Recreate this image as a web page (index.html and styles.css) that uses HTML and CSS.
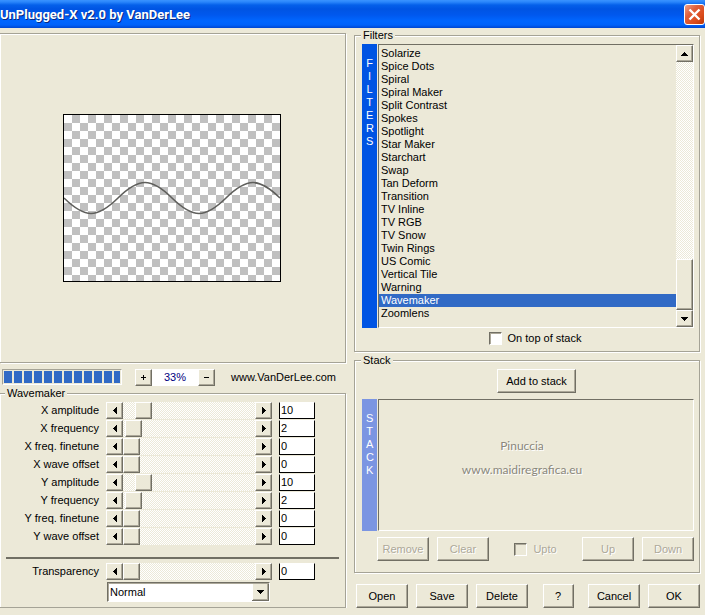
FILE: index.html
```html
<!DOCTYPE html>
<html lang="en">
<head>
    <meta charset="UTF-8">
    <meta name="viewport" content="width=device-width, initial-scale=1.0">
    <title>UnPlugged-X v2.0 by VanDerLee</title>
    <link rel="stylesheet" href="styles.css">
</head>

<body>
    <header class="titlebar">
        <h1>UnPlugged-X v2.0 by VanDerLee</h1>
        <button class="close" aria-label="Close">
            <svg viewBox="0 0 17 17" width="17" height="17"><path d="M3.500 3.500l10 10M13.500 3.500l-10 10" stroke="#fff" stroke-width="2.400" fill="none"/></svg>
        </button>
    </header>

    <main class="main">
        <section class="left">
            <div class="preview">
                <svg class="canvas" viewBox="0 0 216 166" width="216" height="166">
                    <path d="M0 83C21 103.600 33 103.600 54 83S87 62.400 108 83S141 103.600 162 83S195 62.400 216 83" fill="none" stroke="#5f5f5c" stroke-width="1.600"/>
                </svg>
            </div>

            <div class="zoombar">
                <div class="progress" role="progressbar" aria-label="Progress"></div>
                <div class="zoom">
                    <button class="mini" aria-label="Zoom in"><svg viewBox="0 0 7 7" width="7" height="7"><path d="M1 3h5v1H1zM3 1h1v5H3z"/></svg></button>
                    <output class="percent">33%</output>
                    <button class="mini" aria-label="Zoom out"><svg viewBox="0 0 7 7" width="7" height="7"><path d="M1 3h5v1H1z"/></svg></button>
                </div>
                <a class="site" href="#">www.VanDerLee.com</a>
            </div>

            <fieldset class="group params">
                <legend>Wavemaker</legend>
                <div class="rows" id="rows"></div>
                <hr class="rule">
                <div class="rows" id="transparency"></div>
                <div class="blend">
                    <select class="mode" aria-label="Blend mode">
                        <option>Normal</option>
                    </select>
                </div>
            </fieldset>
        </section>

        <section class="right">
            <fieldset class="group">
                <legend>Filters</legend>
                <div class="listrow">
                    <div class="side">FILTERS</div>
                    <div class="listbox">
                        <select class="filters" size="21" aria-label="Filters">
                            <option>Solarize</option>
                            <option>Spice Dots</option>
                            <option>Spiral</option>
                            <option>Spiral Maker</option>
                            <option>Split Contrast</option>
                            <option>Spokes</option>
                            <option>Spotlight</option>
                            <option>Star Maker</option>
                            <option>Starchart</option>
                            <option>Swap</option>
                            <option>Tan Deform</option>
                            <option>Transition</option>
                            <option>TV Inline</option>
                            <option>TV RGB</option>
                            <option>TV Snow</option>
                            <option>Twin Rings</option>
                            <option>US Comic</option>
                            <option>Vertical Tile</option>
                            <option>Warning</option>
                            <option selected>Wavemaker</option>
                            <option>Zoomlens</option>
                        </select>
                        <div class="scrollbar">
                            <button class="mini" aria-label="Scroll up"><svg viewBox="0 0 7 4" width="7" height="4"><path d="M3 0h1v1h1v1h1v1h1v1H0V3h1V2h1V1h1z"/></svg></button>
                            <div class="scrolltrack"><div class="scrollthumb"></div></div>
                            <button class="mini" aria-label="Scroll down"><svg viewBox="0 0 7 4" width="7" height="4"><path d="M0 0h7v1H6v1H5v1H4v1H3V3H2V2H1V1H0z"/></svg></button>
                        </div>
                    </div>
                </div>
                <label class="check center"><input type="checkbox"> On top of stack</label>
            </fieldset>

            <fieldset class="group stack">
                <legend>Stack</legend>
                <button class="btn wide">Add to stack</button>
                <div class="listrow">
                    <div class="side dim">STACK</div>
                    <div class="listbox empty">
                        <p class="mark">Pinuccia<br>www.maidiregrafica.eu</p>
                    </div>
                </div>
                <div class="actions">
                    <button class="btn" disabled>Remove</button>
                    <button class="btn" disabled>Clear</button>
                    <label class="check off"><input type="checkbox" disabled> Upto</label>
                    <button class="btn" disabled>Up</button>
                    <button class="btn" disabled>Down</button>
                </div>
            </fieldset>

            <footer class="footer">
                <button class="btn">Open</button>
                <button class="btn">Save</button>
                <button class="btn">Delete</button>
                <button class="btn help">?</button>
                <button class="btn">Cancel</button>
                <button class="btn">OK</button>
            </footer>
        </section>
    </main>

    <script>
        const params = [
            ["X amplitude", 10],
            ["X frequency", 2],
            ["X freq. finetune", 0],
            ["X wave offset", 0],
            ["Y amplitude", 10],
            ["Y frequency", 2],
            ["Y freq. finetune", 0],
            ["Y wave offset", 0]
        ];

        // Add one label + slider + number row
        function addRow(parent, name, value) {
            const id = name.toLowerCase().replace(/[^a-z]+/g, "-");
            const row = document.createElement("div");
            row.className = "row";
            row.innerHTML = `
                <label for="${id}">${name}</label>
                <div class="slider">
                    <button class="mini" aria-label="Decrease"><svg viewBox="0 0 4 7" width="4" height="7"><path d="M4 0v7H3V6H2V5H1V4H0V3h1V2h1V1h1V0z"/></svg></button>
                    <input type="range" id="${id}" min="0" max="100" value="${value}">
                    <button class="mini" aria-label="Increase"><svg viewBox="0 0 4 7" width="4" height="7"><path d="M0 0v7h1V6h1V5h1V4h1V3H3V2H2V1H1V0z"/></svg></button>
                </div>
                <input type="text" class="value" aria-label="${name} value" value="${value}">
            `;
            const range = row.querySelector("input[type=range]");
            const text = row.querySelector(".value");
            range.addEventListener("input", () => text.value = range.value);
            text.addEventListener("change", () => range.value = text.value);
            parent.appendChild(row);
        }

        params.forEach(p => addRow(document.getElementById("rows"), p[0], p[1]));
        addRow(document.getElementById("transparency"), "Transparency", 0);
    </script>
</body>
</html>
```
FILE: styles.css
```css
* {
    box-sizing: border-box;
}

body {
    margin: 0;
    background-color: #ece9d8;
    color: #000;
    font: 11px/13px "Liberation Sans", Arial, sans-serif;
}

button, input, select {
    margin: 0;
    font: inherit;
    color: inherit;
    border-radius: 0;
}

/* title bar */
.titlebar {
    display: flex;
    align-items: center;
    justify-content: space-between;
    height: 28px;
    background: linear-gradient(#3a93ff 0, #2a86fb 2px, #0560ea 5px, #0054e3 9px, #0058ee 15px, #0066ff 21px, #0062fa 25px, #0046d0 28px);
}

h1 {
    margin: 0;
    padding-top: 2px;
    font: bold 13px/16px Roboto, sans-serif;
    color: #fff;
    text-shadow: 1px 1px 0 #0a2a80;
}

.close {
    display: flex;
    align-items: center;
    justify-content: center;
    width: 21px;
    height: 21px;
    padding: 0;
    border: 1px solid #fff;
    border-radius: 3px;
    background: linear-gradient(135deg, #f0a088 0, #e0603c 35%, #dc4c1c 70%, #b83608 100%);
}

/* layout */
.main {
    display: grid;
    grid-template-columns: 1fr 1fr;
    gap: 8px;
    padding-right: 5px;
}

.left, .right {
    display: flex;
    flex-direction: column;
    min-width: 0;
}

.group, .preview {
    margin: 0;
    min-width: 0;
    border: 1px solid #a5a396;
    box-shadow: 1px 1px 0 #fff, inset 1px 1px 0 #fff;
}

.group {
    padding: 2px 5px 6px 7px;
}

legend {
    margin-left: -1px;
    padding: 1px 2px 0;
    background-color: #ece9d8;
}

/* preview */
.preview {
    display: flex;
    justify-content: center;
    margin-top: 5px;
    padding: 80px 2px 80px 0;
    border-left: none;
}

.canvas {
    box-sizing: content-box;
    border: 1px solid #000;
    background: repeating-conic-gradient(#c0c0c0 0 25%, #fff 0 50%) 0 0 / 16px 16px;
}

.zoombar {
    display: flex;
    align-items: center;
    height: 18px;
    margin-top: 5px;
    padding-left: 2px;
}

.progress {
    width: 120px;
    height: 16px;
    border: 1px solid;
    border-color: #a5a396 #fff #fff #a5a396;
    padding: 1px;
    background: repeating-linear-gradient(90deg, #316ac5 0 8px, #ece9d8 8px 10px) content-box;
}

.zoom {
    display: flex;
    margin-left: 13px;
}

.percent {
    width: 46px;
    line-height: 17px;
    text-align: center;
    background-color: #fff;
    color: #000080;
}

.site {
    margin-left: 16px;
    color: #000;
    text-decoration: none;
}

/* raised controls */
.mini, .btn, .scrollthumb {
    border: 1px solid;
    border-color: #fff #716f64 #716f64 #fff;
    background-color: #ece9d8;
    box-shadow: inset -1px -1px 0 #aca899;
}

.mini {
    display: flex;
    flex: none;
    align-items: center;
    justify-content: center;
    width: 17px;
    height: 17px;
    padding: 0;
}

.btn {
    width: 52px;
    height: 24px;
    padding: 0;
}

.btn:disabled, .off {
    color: #aca899;
    text-shadow: 1px 1px 0 #fff;
}

.wide {
    width: 79px;
}

.help {
    width: 31px;
}

/* slider rows */
.params {
    padding: 2px 6px 5px;
    border-left: none;
}

.rows {
    display: grid;
    gap: 1px;
}

.row {
    display: grid;
    grid-template-columns: 93px 166px 36px;
    column-gap: 7px;
    align-items: center;
    height: 17px;
}

.row label {
    text-align: right;
}

.slider {
    display: flex;
    height: 17px;
}

.slider input {
    flex: 1;
    min-width: 0;
    height: 17px;
    appearance: none;
    background: repeating-conic-gradient(#fff 0 25%, #ece9d8 0 50%) 0 0 / 2px 2px;
}

.slider input::-webkit-slider-thumb {
    appearance: none;
    width: 17px;
    height: 17px;
    border: 1px solid;
    border-color: #fff #716f64 #716f64 #fff;
    background-color: #ece9d8;
    box-shadow: inset -1px -1px 0 #aca899;
}

.value {
    width: 36px;
    height: 17px;
    padding: 0 1px 2px;
    border: 1px solid #000;
    border-top-color: #fff;
    background-color: #fff;
}

.rule {
    height: 2px;
    margin: 12px 0 4px;
    border: none;
    background-color: #716f64;
}

.blend {
    padding: 2px 0 0 101px;
}

.mode {
    display: block;
    width: 163px;
    height: 20px;
    padding: 0 2px;
    border: 1px solid;
    border-color: #716f64 #fff #fff #716f64;
    appearance: none;
    background: #fff url("data:image/svg+xml,%3Csvg xmlns='http://www.w3.org/2000/svg' width='17' height='18'%3E%3Cpath fill='%23716f64' d='M0 0h17v18H0z'/%3E%3Cpath fill='%23fff' d='M0 0h16v17H0z'/%3E%3Cpath fill='%23aca899' d='M1 1h15v16H1z'/%3E%3Cpath fill='%23ece9d8' d='M1 1h14v15H1z'/%3E%3Cpath d='M5 7h7v1h-1v1h-1v1H9v1H8v-1H7V9H6V8H5z'/%3E%3C/svg%3E") right 0 top 0 no-repeat;
    box-shadow: inset 1px 1px 0 #aca899;
}

/* lists */
.listrow {
    display: flex;
}

.side {
    width: 15px;
    margin-right: 1px;
    padding: 13px 4px 0;
    background-color: #0054e3;
    color: #fff;
    text-align: center;
    word-break: break-all;
}

.dim {
    background-color: #7b95e2;
}

.listbox {
    display: flex;
    flex: 1;
    min-width: 0;
    border: 1px solid;
    border-color: #716f64 #fff #fff #716f64;
}

.filters {
    flex: 1;
    min-width: 0;
    height: 282px;
    padding: 2px 0 0;
    border: none;
    outline: none;
    overflow: hidden;
    background-color: #ece9d8;
}

.filters option {
    min-height: 13px;
    height: 13px;
    padding: 0 2px;
    line-height: 13px;
}

.filters option:checked {
    background: #316ac5 linear-gradient(#316ac5, #316ac5);
    -webkit-text-fill-color: #fff;
}

.scrollbar {
    display: flex;
    flex-direction: column;
    width: 17px;
}

.scrolltrack {
    display: flex;
    flex: 1;
    flex-direction: column;
    justify-content: flex-end;
    background: repeating-conic-gradient(#fff 0 25%, #ece9d8 0 50%) 0 0 / 2px 2px;
}

.scrollthumb {
    height: 51px;
}

.check {
    display: flex;
    align-items: center;
    gap: 6px;
}

.center {
    justify-content: center;
    margin-top: 4px;
    padding-left: 14px;
}

.check input {
    width: 13px;
    height: 13px;
    appearance: none;
    border: 1px solid;
    border-color: #716f64 #fff #fff #716f64;
    background-color: #fff;
    box-shadow: inset 1px 1px 0 #aca899;
}

.off input {
    background-color: #ece9d8;
}

/* stack */
.stack {
    margin-top: 1px;
    padding-bottom: 11px;
}

.stack .wide {
    display: block;
    margin: 0 auto 6px 135px;
}

.empty {
    justify-content: center;
    height: 132px;
    padding: 34px 28px 0 0;
}

.mark {
    margin: 0;
    font: 12px/24px Lato, "Liberation Sans", sans-serif;
    color: #8a877c;
    text-align: center;
    text-shadow: 1px 1px 0 #fff;
}

.actions {
    display: flex;
    gap: 8px;
    margin-top: 6px;
    padding-left: 15px;
}

.actions .off {
    margin: 0 auto;
}

.footer {
    display: flex;
    gap: 8px;
    margin-top: 11px;
    padding-left: 2px;
}

.footer .help {
    margin: 0 auto;
}
```
